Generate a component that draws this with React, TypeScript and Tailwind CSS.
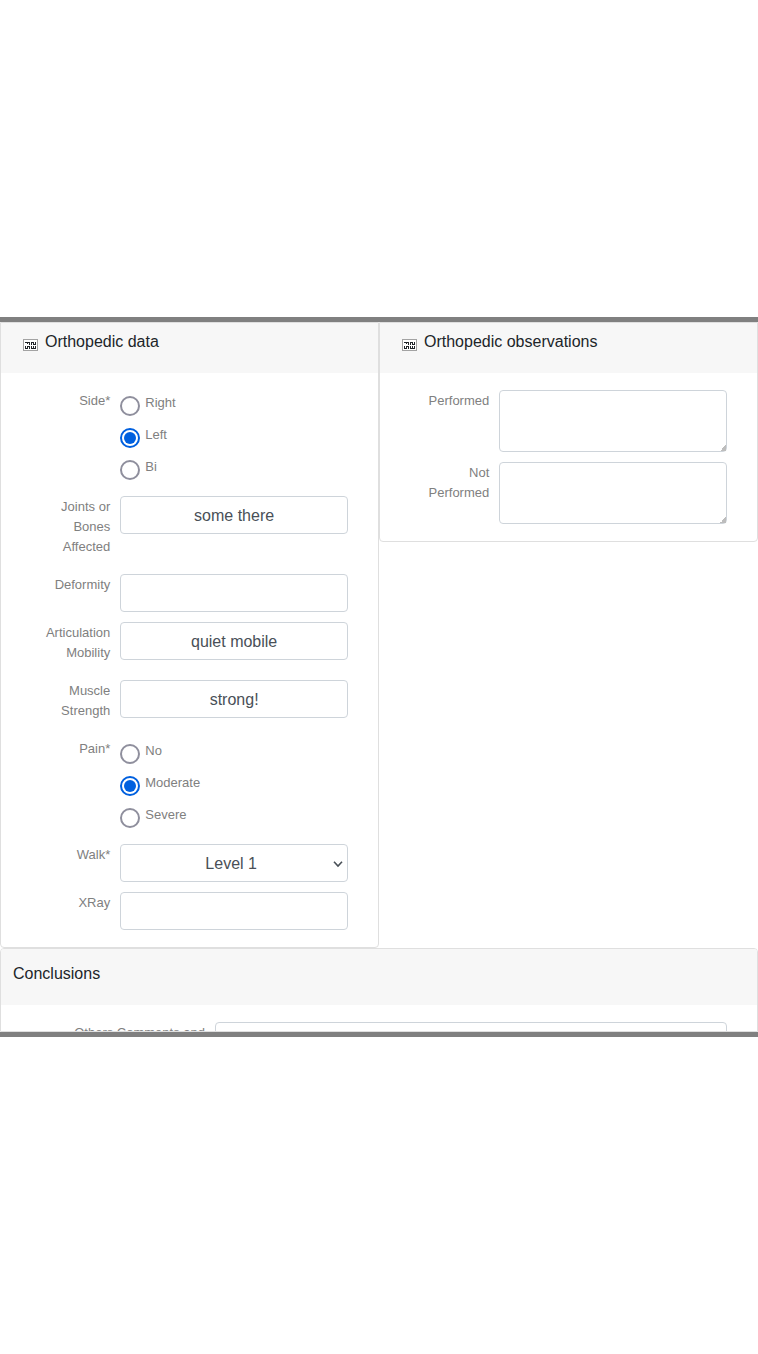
import { useId, type ReactNode } from 'react';

const control =
  'block w-full rounded border border-[#ced4da] bg-white px-3 pt-[7px] pb-[5px] text-center text-base leading-6 text-[#495057] outline-none focus:border-[#80bdff]';

const cells = [
  '11111011101',
  '00101010101',
  '00001010111',
  '00000000000',
  '10111010101',
  '10101010101',
  '11101011111',
];

function ToggleGlyph() {
  return (
    <svg width="15" height="12" viewBox="0 0 15 12" shapeRendering="crispEdges" aria-hidden="true">
      <rect x="0.5" y="0.5" width="14" height="11" fill="#ffffff" stroke="#a3a3a3" />
      {cells.map((line, y) =>
        line
          .split('')
          .map((cell, x) =>
            cell === '1' ? (
              <rect key={`${x}-${y}`} x={x + 2} y={y + 3} width="1" height="1" fill="#212529" />
            ) : null,
          ),
      )}
    </svg>
  );
}

function Card({ title, toggle = false, className = '', children }: {
  title: string;
  toggle?: boolean;
  className?: string;
  children: ReactNode;
}) {
  return (
    <section className={`overflow-hidden border border-[#dfdfdf] bg-white ${className}`}>
      {toggle ? (
        <header className="flex items-end gap-[7px] bg-[#f7f7f7] px-[22px] pt-[7px] pb-[19px]">
          <span className="pb-[3px]">
            <ToggleGlyph />
          </span>
          <h2 className="leading-6">{title}</h2>
        </header>
      ) : (
        <header className="bg-[#f7f7f7] px-3 pt-[13px] pb-[19px]">
          <h2 className="leading-6">{title}</h2>
        </header>
      )}
      <div className="flex flex-col gap-2.5 px-[30px] py-[17px]">{children}</div>
    </section>
  );
}

function Field({ label, children }: { label: string; children: (id: string) => ReactNode }) {
  const id = useId();
  return (
    <div className="flex items-start">
      <label
        htmlFor={id}
        className="w-1/4 pt-px pb-[7px] text-right text-[13px] leading-5 text-[#808080]"
      >
        {label}
      </label>
      <div className="w-3/4 pl-2.5">{children(id)}</div>
    </div>
  );
}

function TextField({ label, value = '' }: { label: string; value?: string }) {
  return (
    <Field label={label}>
      {(id) => <input id={id} type="text" defaultValue={value} className={control} />}
    </Field>
  );
}

function AreaField({ label }: { label: string }) {
  return (
    <Field label={label}>
      {(id) => (
        <textarea
          id={id}
          rows={2}
          className={`${control} [&::-webkit-resizer]:bg-[linear-gradient(135deg,transparent_80%,#bdbdbd_80%)]`}
        />
      )}
    </Field>
  );
}

function RadioField({ label, name, options, selected }: {
  label: string;
  name: string;
  options: string[];
  selected: string;
}) {
  return (
    <fieldset className="flex items-start" aria-label={label}>
      <div className="w-1/4 pt-px text-right text-[13px] leading-5 text-[#808080]">{label}</div>
      <div className="w-3/4 pl-2.5">
        {options.map((option) => (
          <label
            key={option}
            className="flex h-8 items-start gap-[5px] text-[13px] leading-5 text-[#808080]"
          >
            <input
              type="radio"
              name={name}
              value={option}
              defaultChecked={option === selected}
              className="mt-1.5 size-5 shrink-0 appearance-none rounded-full border-2 border-[#8f8f9d] bg-white bg-clip-content p-0.5 checked:border-[#0060df] checked:bg-[#0060df]"
            />
            <span className="pt-[3px]">{option}</span>
          </label>
        ))}
      </div>
    </fieldset>
  );
}

export default function App() {
  return (
    <main className="flex min-h-screen items-center bg-white font-['Liberation_Sans',Arial,sans-serif] text-base text-[#212529]">
      <form className="flex max-h-[720px] w-full flex-col border-y-5 border-[#808080]">
        <div className="flex shrink-0 items-start">
          <Card title="Orthopedic data" toggle className="w-1/2 rounded-b">
            <RadioField label="Side*" name="side" options={['Right', 'Left', 'Bi']} selected="Left" />
            <TextField label="Joints or Bones Affected" value="some there" />
            <TextField label="Deformity" />
            <TextField label="Articulation Mobility" value="quiet mobile" />
            <TextField label="Muscle Strength" value="strong!" />
            <RadioField
              label="Pain*"
              name="pain"
              options={['No', 'Moderate', 'Severe']}
              selected="Moderate"
            />
            <Field label="Walk*">
              {(id) => (
                <div className="relative">
                  <select
                    id={id}
                    defaultValue="Level 1"
                    className="block w-full appearance-none rounded border border-[#ced4da] bg-white pt-[7px] pr-[18px] pb-[5px] pl-3 text-center text-base leading-6 text-[#495057] outline-none [text-align-last:center] focus:border-[#80bdff]"
                  >
                    <option>Level 1</option>
                  </select>
                  <svg
                    className="pointer-events-none absolute top-4 right-[5px]"
                    width="10"
                    height="8"
                    viewBox="0 0 10 8"
                    fill="none"
                    stroke="#495057"
                    strokeWidth="1.6"
                    aria-hidden="true"
                  >
                    <path d="M1 1.8 5 6 9 1.8" />
                  </svg>
                </div>
              )}
            </Field>
            <TextField label="XRay" />
          </Card>
          <Card title="Orthopedic observations" toggle className="w-1/2 rounded-b">
            <AreaField label="Performed" />
            <AreaField label="Not Performed" />
          </Card>
        </div>
        <Card title="Conclusions" className="min-h-0 rounded-t">
          <AreaField label="Others Comments and" />
        </Card>
      </form>
    </main>
  );
}
